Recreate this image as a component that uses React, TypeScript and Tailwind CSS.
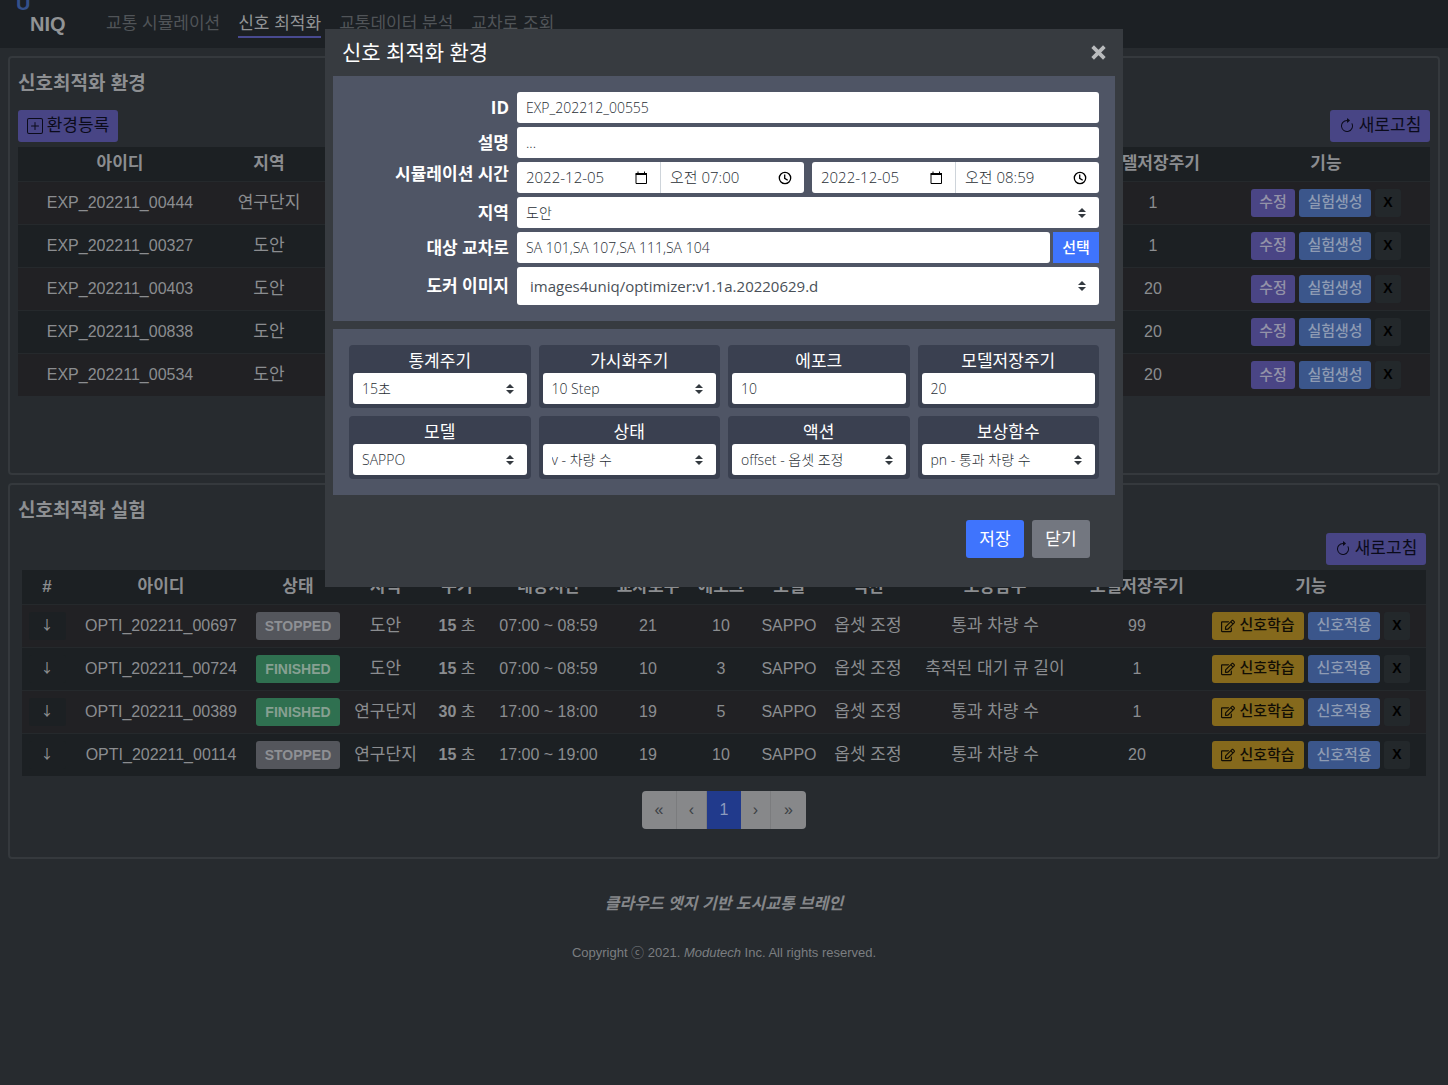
import { useState, type ReactNode } from 'react';
import { BsArrowClockwise, BsPlusSquare } from 'react-icons/bs';
import { FaRegEdit } from 'react-icons/fa';

interface Environment {
  id: string;
  region: string;
  saveEpoch: number;
}

interface Experiment {
  id: string;
  status: 'STOPPED' | 'FINISHED';
  region: string;
  period: number;
  time: string;
  crossCount: number;
  epoch: number;
  reward: string;
  saveEpoch: number;
}

const environments: Environment[] = [
  { id: 'EXP_202211_00444', region: '연구단지', saveEpoch: 1 },
  { id: 'EXP_202211_00327', region: '도안', saveEpoch: 1 },
  { id: 'EXP_202211_00403', region: '도안', saveEpoch: 20 },
  { id: 'EXP_202211_00838', region: '도안', saveEpoch: 20 },
  { id: 'EXP_202211_00534', region: '도안', saveEpoch: 20 },
];

const experiments: Experiment[] = [
  { id: 'OPTI_202211_00697', status: 'STOPPED', region: '도안', period: 15, time: '07:00 ~ 08:59', crossCount: 21, epoch: 10, reward: '통과 차량 수', saveEpoch: 99 },
  { id: 'OPTI_202211_00724', status: 'FINISHED', region: '도안', period: 15, time: '07:00 ~ 08:59', crossCount: 10, epoch: 3, reward: '축적된 대기 큐 길이', saveEpoch: 1 },
  { id: 'OPTI_202211_00389', status: 'FINISHED', region: '연구단지', period: 30, time: '17:00 ~ 18:00', crossCount: 19, epoch: 5, reward: '통과 차량 수', saveEpoch: 1 },
  { id: 'OPTI_202211_00114', status: 'STOPPED', region: '연구단지', period: 15, time: '17:00 ~ 19:00', crossCount: 19, epoch: 10, reward: '통과 차량 수', saveEpoch: 20 },
];

const columns = [
  { label: '#', width: 'w-[50px]' },
  { label: '아이디', width: 'w-[178px]' },
  { label: '상태', width: 'w-[96px]' },
  { label: '지역', width: 'w-[79px]' },
  { label: '주기', width: 'w-[64px]' },
  { label: '대상시간', width: 'w-[119px]' },
  { label: '교차로수', width: 'w-[80px]' },
  { label: '에포크', width: 'w-[66px]' },
  { label: '모델', width: 'w-[70px]' },
  { label: '액션', width: 'w-[88px]' },
  { label: '보상함수', width: 'w-[166px]' },
  { label: '모델저장주기', width: 'w-[118px]' },
  { label: '기능', width: 'w-[230px]' },
];

const menus = ['교통 시뮬레이션', '신호 최적화', '교통데이터 분석', '교차로 조회'];

const field =
  'h-[31px] w-full rounded-[3px] bg-white px-[9px] text-[14px] font-light text-[#282e34] outline-none';
const smallButton = 'h-7 rounded-[3px] text-[15px] font-medium whitespace-nowrap';
const deleteButton = 'h-7 w-[26px] rounded-[3px] bg-[#23282b] text-[14px] font-bold text-black';
const rowStyle = 'h-[43px] border-t border-[#25292c] odd:bg-[#212124]';

function NavBar() {
  return (
    <nav className="relative flex h-12 items-center overflow-hidden bg-[#1c2024] pl-[30px]">
      <span className="absolute -top-[11px] left-4 text-[20px] leading-7 font-bold text-[#34508a]">U</span>
      <span className="w-[76px] text-[20px] font-bold text-[#919395]">NIQ</span>
      <ul className="flex gap-[18px]">
        {menus.map((menu) => (
          <li key={menu}>
            <a
              href="#"
              className={
                menu === '신호 최적화'
                  ? 'block border-b-2 border-[#484a90] pt-[2px] text-[17px] leading-6 text-[#929496]'
                  : 'block border-b-2 border-transparent pt-[2px] text-[17px] leading-6 text-[#505458]'
              }
            >
              {menu}
            </a>
          </li>
        ))}
      </ul>
    </nav>
  );
}

function PurpleButton({ icon, children }: { icon: ReactNode; children: ReactNode }) {
  return (
    <button className="flex h-8 w-[100px] items-center justify-center gap-1 rounded-[3px] bg-[#484585] text-[17px] whitespace-nowrap text-[#0b0b1a]">
      {icon}
      {children}
    </button>
  );
}

function EnvironmentCard() {
  return (
    <section className="h-[419px] rounded-[4px] border-2 border-[#35393d] px-2 pt-3">
      <h2 className="text-[19px] leading-7 font-bold text-[#8d8f92]">신호최적화 환경</h2>
      <div className="mt-3 mb-[5px] flex justify-between">
        <PurpleButton icon={<BsPlusSquare className="h-4 w-4" />}>환경등록</PurpleButton>
        <PurpleButton icon={<BsArrowClockwise className="h-4 w-4" />}>새로고침</PurpleButton>
      </div>
      <table className="w-full table-fixed bg-[#1c2023] text-center text-[#8b8d90]">
        <thead>
          <tr className="h-[34px] text-[17px]">
            <th className="w-[204px]">아이디</th>
            <th className="w-[94px]">지역</th>
            <td />
            <th className="w-[138px]">모델저장주기</th>
            <th className="w-[208px]">기능</th>
          </tr>
        </thead>
        <tbody>
          {environments.map((env) => (
            <tr key={env.id} className={rowStyle}>
              <td>{env.id}</td>
              <td className="text-[17px]">{env.region}</td>
              <td />
              <td>{env.saveEpoch}</td>
              <td>
                <div className="flex justify-center gap-1">
                  <button className={`${smallButton} w-[44px] bg-[#4a4585] text-[#9392a8]`}>수정</button>
                  <button className={`${smallButton} w-[72px] bg-[#3b568b] text-[#8e9bb3]`}>실험생성</button>
                  <button className={deleteButton}>X</button>
                </div>
              </td>
            </tr>
          ))}
        </tbody>
      </table>
    </section>
  );
}

function Pagination() {
  const side = 'h-[38px] border-r border-[#7b7c7e] bg-[#87888a] text-[#3c4044] last:border-0';
  return (
    <div className="mt-[15px] flex justify-center">
      <div className="flex overflow-hidden rounded-[4px]">
        <button className={`${side} w-[35px]`}>«</button>
        <button className={`${side} w-[30px]`}>‹</button>
        <button className="h-[38px] w-[34px] bg-[#213a8c] text-[#8d9bbd]">1</button>
        <button className={`${side} w-[30px]`}>›</button>
        <button className={`${side} w-[35px]`}>»</button>
      </div>
    </div>
  );
}

function ExperimentCard() {
  return (
    <section className="mt-2 h-[376px] rounded-[4px] border-2 border-[#35393d] px-2 pt-3">
      <h2 className="text-[19px] leading-7 font-bold text-[#8d8f92]">신호최적화 실험</h2>
      <div className="mx-1 mt-2">
        <div className="mb-[5px] flex justify-end">
          <PurpleButton icon={<BsArrowClockwise className="h-4 w-4" />}>새로고침</PurpleButton>
        </div>
        <table className="w-full table-fixed bg-[#1c2023] text-center text-[#8b8d90]">
          <thead>
            <tr className="h-[34px] text-[17px]">
              {columns.map((col) => (
                <th key={col.label} className={`${col.width} whitespace-nowrap`}>
                  {col.label}
                </th>
              ))}
            </tr>
          </thead>
          <tbody>
            {experiments.map((exp) => (
              <tr key={exp.id} className={rowStyle}>
                <td>
                  <button className='block h-7 w-[37px] mx-auto rounded-[3px] bg-[#1c2023] pb-1 font-["Noto_Sans_CJK_KR",sans-serif] text-[13px] font-medium'>
                    ↓
                  </button>
                </td>
                <td>{exp.id}</td>
                <td>
                  <span
                    className={
                      exp.status === 'STOPPED'
                        ? 'mx-auto block h-7 w-[84px] rounded-[3px] bg-[#54565c] text-[14px] leading-7 font-bold text-[#8e9094]'
                        : 'mx-auto block h-7 w-[84px] rounded-[3px] bg-[#2f7050] text-[14px] leading-7 font-bold text-[#87a092]'
                    }
                  >
                    {exp.status}
                  </span>
                </td>
                <td className="text-[17px]">{exp.region}</td>
                <td>
                  <b>{exp.period}</b> 초
                </td>
                <td>{exp.time}</td>
                <td>{exp.crossCount}</td>
                <td>{exp.epoch}</td>
                <td>SAPPO</td>
                <td className="text-[17px]">옵셋 조정</td>
                <td className="text-[17px]">{exp.reward}</td>
                <td>{exp.saveEpoch}</td>
                <td>
                  <div className="flex justify-center gap-1">
                    <button className={`${smallButton} flex w-[92px] items-center justify-center gap-1 bg-[#85691c] text-[#120e05]`}>
                      <FaRegEdit className="h-[14px] w-[14px]" />
                      신호학습
                    </button>
                    <button className={`${smallButton} w-[72px] bg-[#3b568b] text-[#8e9bb3]`}>신호적용</button>
                    <button className={deleteButton}>X</button>
                  </div>
                </td>
              </tr>
            ))}
          </tbody>
        </table>
      </div>
      <Pagination />
    </section>
  );
}

function Select({ id, value, large }: { id: string; value: string; large?: boolean }) {
  return (
    <div className="relative w-full">
      <select
        id={id}
        className={
          large
            ? 'block h-[38px] w-full appearance-none rounded-[3px] bg-white px-[13px] text-[15px] text-[#495057] outline-none'
            : `${field} block appearance-none`
        }
      >
        <option>{value}</option>
      </select>
      <svg viewBox="0 0 4 5" className="pointer-events-none absolute top-1/2 right-[13px] h-[10px] w-2 -translate-y-1/2">
        <path fill="#343a40" d="M2 0L0 2h4zm0 5L0 3h4z" />
      </svg>
    </div>
  );
}

function CalendarIcon() {
  return (
    <svg viewBox="0 0 16 16" className="h-4 w-4" fill="none" stroke="#000">
      <path d="M3 4.500v9h10.500v-9z" />
      <path d="M2.500 4h11.500" strokeWidth="2" />
      <path d="M5 1.500v2M11.500 1.500v2" />
    </svg>
  );
}

function ClockIcon() {
  return (
    <svg viewBox="0 0 16 16" className="h-4 w-4" fill="none" stroke="#000" strokeWidth="1.300">
      <circle cx="8" cy="8" r="5.700" />
      <path d="M7.700 4.500v3.800l3 1.900" />
    </svg>
  );
}

function DateTime({ name, date, time }: { name: string; date: string; time: string }) {
  const part = 'flex h-[31px] flex-1 items-center bg-white pr-[11px]';
  const input = 'w-full min-w-0 bg-white pl-[9px] text-[15px] font-light text-[#282e34] outline-none';
  return (
    <div className="flex flex-1 overflow-hidden rounded-[3px]">
      <div className={`${part} border-r border-[#ced4da]`}>
        <input aria-label={`${name} 날짜`} className={input} defaultValue={date} />
        <button aria-label="날짜 선택">
          <CalendarIcon />
        </button>
      </div>
      <div className={part}>
        <input aria-label={`${name} 시간`} className={input} defaultValue={time} />
        <button aria-label="시간 선택">
          <ClockIcon />
        </button>
      </div>
    </div>
  );
}

function Row({ label, id, children }: { label: string; id?: string; children: ReactNode }) {
  return (
    <div className={id ? 'flex items-center' : 'flex items-start'}>
      <label htmlFor={id} className="w-[168px] shrink-0 pr-2 text-right text-[17px] leading-6 font-bold text-white">
        {label}
      </label>
      <div className="flex min-w-0 flex-1">{children}</div>
    </div>
  );
}

function Tile({ label, id, children }: { label: string; id: string; children: ReactNode }) {
  return (
    <div className="rounded-[4px] bg-[#3a4050] p-1">
      <label htmlFor={id} className="block text-center text-[17px] leading-6 text-white">
        {label}
      </label>
      {children}
    </div>
  );
}

function EnvironmentModal({ onClose }: { onClose: () => void }) {
  return (
    <div className="fixed inset-0 flex items-start justify-center pt-[29px]">
      <div
        role="dialog"
        aria-label="신호 최적화 환경"
        className='w-full max-w-[798px] bg-[#373b40] px-2 font-["Open_Sans","Noto_Sans_CJK_KR",sans-serif]'
      >
        <header className="flex h-[47px] items-center justify-between pr-2 pl-[9px]">
          <h1 className="text-[21px] text-white">신호 최적화 환경</h1>
          <button aria-label="닫기" onClick={onClose}>
            <svg viewBox="0 0 16 16" className="h-[17px] w-[17px]" stroke="#b9bbbd" strokeWidth="3.500">
              <path d="M2.500 2.500l11 11M13.500 2.500l-11 11" />
            </svg>
          </button>
        </header>

        <div className="flex flex-col gap-1 bg-[#4f5565] p-4">
          <Row label="ID" id="env-id">
            <input id="env-id" className={field} defaultValue="EXP_202212_00555" />
          </Row>
          <Row label="설명" id="env-desc">
            <input id="env-desc" className={field} defaultValue="..." />
          </Row>
          <Row label="시뮬레이션 시간">
            <div className="flex flex-1 gap-2">
              <DateTime name="시작" date="2022-12-05" time="오전 07:00" />
              <DateTime name="종료" date="2022-12-05" time="오전 08:59" />
            </div>
          </Row>
          <Row label="지역" id="env-region">
            <Select id="env-region" value="도안" />
          </Row>
          <Row label="대상 교차로" id="env-cross">
            <input id="env-cross" className={field} defaultValue="SA 101,SA 107,SA 111,SA 104" />
            <button className="ml-[3px] h-[31px] w-[46px] shrink-0 bg-[#3f74fd] text-[15px] font-medium text-white">
              선택
            </button>
          </Row>
          <Row label="도커 이미지" id="env-image">
            <Select id="env-image" value="images4uniq/optimizer:v1.1a.20220629.d" large />
          </Row>
        </div>

        <div className="mt-2 grid grid-cols-4 gap-2 bg-[#4f5565] p-4">
          <Tile label="통계주기" id="stat">
            <Select id="stat" value="15초" />
          </Tile>
          <Tile label="가시화주기" id="visual">
            <Select id="visual" value="10 Step" />
          </Tile>
          <Tile label="에포크" id="epoch">
            <input id="epoch" className={field} defaultValue="10" />
          </Tile>
          <Tile label="모델저장주기" id="save">
            <input id="save" className={field} defaultValue="20" />
          </Tile>
          <Tile label="모델" id="model">
            <Select id="model" value="SAPPO" />
          </Tile>
          <Tile label="상태" id="state">
            <Select id="state" value="v - 차량 수" />
          </Tile>
          <Tile label="액션" id="action">
            <Select id="action" value="offset - 옵셋 조정" />
          </Tile>
          <Tile label="보상함수" id="reward">
            <Select id="reward" value="pn - 통과 차량 수" />
          </Tile>
        </div>

        <footer className="flex justify-end gap-2 pt-[25px] pr-[25px] pb-[29px] text-[17px] text-white">
          <button className="h-[38px] w-[58px] rounded-[3px] bg-[#3f74fd]">저장</button>
          <button className="h-[38px] w-[58px] rounded-[3px] bg-[#737780]" onClick={onClose}>
            닫기
          </button>
        </footer>
      </div>
    </div>
  );
}

export default function App() {
  const [open, setOpen] = useState(true);
  return (
    <div className='min-h-screen bg-[#272b2f] font-["Liberation_Sans","Noto_Sans_CJK_KR",sans-serif] text-[16px]'>
      <NavBar />
      <main className="p-2">
        <EnvironmentCard />
        <ExperimentCard />
      </main>
      <footer className="pt-[25px] text-center">
        <p className="text-[16px] leading-6 font-bold text-[#85878a] italic">클라우드 엣지 기반 도시교통 브레인</p>
        <p className="mt-[27px] text-[13px] leading-5 text-[#7b7e81]">
          Copyright ⓒ 2021. <i>Modutech</i> Inc. All rights reserved.
        </p>
      </footer>
      {open && <EnvironmentModal onClose={() => setOpen(false)} />}
    </div>
  );
}
